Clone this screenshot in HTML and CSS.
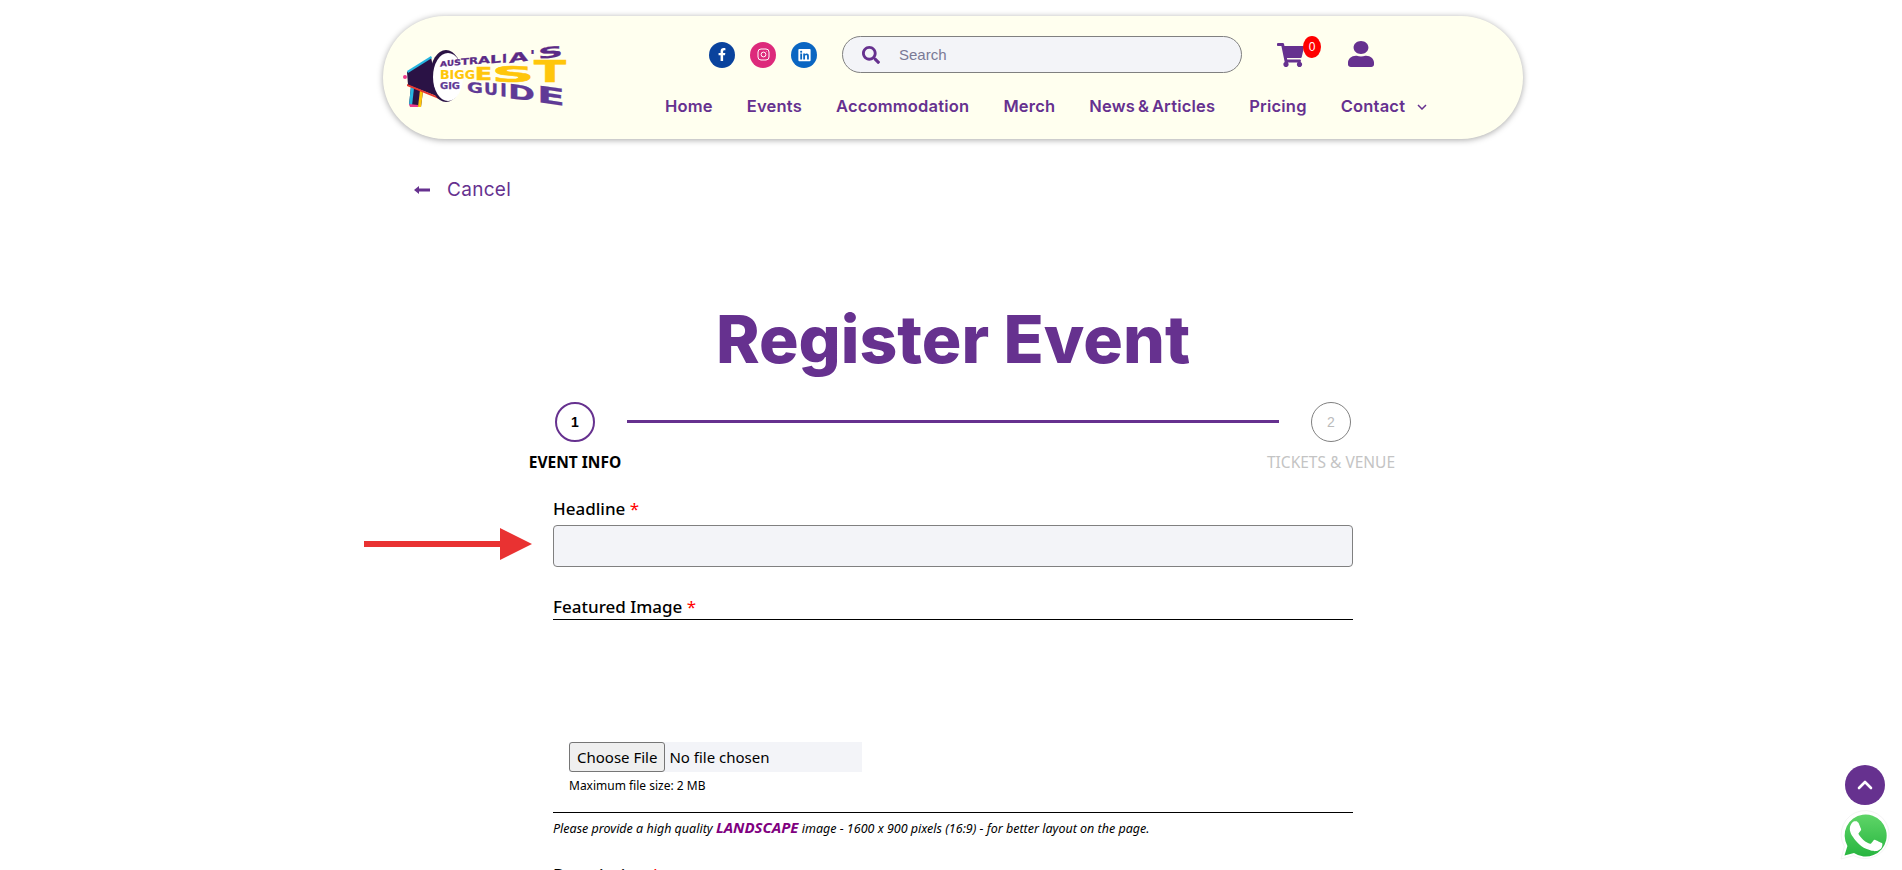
FILE: index.html
```html
<!DOCTYPE html>
<html lang="en">
<head>
    <meta charset="UTF-8">
    <meta name="viewport" content="width=device-width, initial-scale=1.0">
    <title>Register Event</title>
    <link rel="stylesheet" href="styles.css">
</head>
<body>
    <div class="page">
        <header class="site-header">
            <a class="logo" href="#">
                <svg width="190" height="90" viewBox="0 0 190 90" font-family="DejaVu Sans" font-weight="700">
                    <!-- megaphone -->
                    <polygon points="16,56 28,61 26,77 14,75" fill="#2a1245"/>
                    <polygon points="16,56 19,58 17,76 14,75" fill="#27b5e0"/>
                    <polygon points="25,60 28,61 26,77 23,77" fill="#ffc60b"/>
                    <polygon points="14,74 23,75 23,77 15,77" fill="#ee3a8c"/>
                    <polygon points="12,42 36,27 44,67 13,55" fill="#2a1245"/>
                    <polygon points="12,41 36,26 37,28 13,43" fill="#27b5e0"/>
                    <polygon points="12,54 44,67 44,69 12,56" fill="#e8372f"/>
                    <circle cx="10" cy="47" r="2" fill="#ee3a8c"/>
                    <ellipse cx="51" cy="46" rx="16" ry="26" fill="#2a1245"/>
                    <ellipse cx="53" cy="47" rx="15" ry="24" fill="#fff"/>
                    <!-- AUSTRALIA'S -->
                    <g fill="#5b2a86" stroke="#5b2a86" stroke-width=".25">
                        <text transform="translate(45 36.5) skewY(-3)" font-size="7" textLength="7" lengthAdjust="spacingAndGlyphs">A</text>
                        <text transform="translate(52 36) skewY(-3)" font-size="8" textLength="7" lengthAdjust="spacingAndGlyphs">U</text>
                        <text transform="translate(59 35.5) skewY(-4)" font-size="8" textLength="7" lengthAdjust="spacingAndGlyphs">S</text>
                        <text transform="translate(66 35) skewY(-4)" font-size="9" textLength="8" lengthAdjust="spacingAndGlyphs">T</text>
                        <text transform="translate(74 34.5) skewY(-5)" font-size="9.5" textLength="9" lengthAdjust="spacingAndGlyphs">R</text>
                        <text transform="translate(83 34) skewY(-5)" font-size="10" textLength="12" lengthAdjust="spacingAndGlyphs">A</text>
                        <text transform="translate(95 33.5) skewY(-6)" font-size="11" textLength="11" lengthAdjust="spacingAndGlyphs">L</text>
                        <text transform="translate(107 33) skewY(-6)" font-size="12" textLength="5" lengthAdjust="spacingAndGlyphs">I</text>
                        <text transform="translate(114 33) skewY(-7)" font-size="13" textLength="19" lengthAdjust="spacingAndGlyphs">A</text>
                        <text transform="translate(135 30)" font-size="14" textLength="5" lengthAdjust="spacingAndGlyphs">'</text>
                        <text transform="translate(143 29) skewY(-6)" font-size="15" textLength="25" lengthAdjust="spacingAndGlyphs">S</text>
                    </g>
                    <!-- BIGGEST -->
                    <g fill="#ffc60b" stroke="#ffc60b" stroke-width=".6">
                        <text x="45" y="49" font-size="12" stroke-width=".1" textLength="35" lengthAdjust="spacingAndGlyphs">BIGG</text>
                        <text x="80" y="50" font-size="17" textLength="17" lengthAdjust="spacingAndGlyphs">E</text>
                        <text x="97" y="52" font-size="21" textLength="42" lengthAdjust="spacingAndGlyphs">S</text>
                        <text x="139" y="52" font-size="31" textLength="32" lengthAdjust="spacingAndGlyphs">T</text>
                    </g>
                    <!-- GIG GUIDE -->
                    <g fill="#5f3a96" stroke="#5f3a96" stroke-width=".25">
                        <text x="45" y="59" font-size="9" textLength="20" lengthAdjust="spacingAndGlyphs">GIG</text>
                        <text transform="translate(72 62) skewY(5)" font-size="14" textLength="16" lengthAdjust="spacingAndGlyphs">G</text>
                        <text transform="translate(89 64) skewY(6)" font-size="16" textLength="14" lengthAdjust="spacingAndGlyphs">U</text>
                        <text transform="translate(105 66) skewY(7)" font-size="18" textLength="7" lengthAdjust="spacingAndGlyphs">I</text>
                        <text transform="translate(113 68) skewY(8)" font-size="20" textLength="27" lengthAdjust="spacingAndGlyphs">D</text>
                        <text transform="translate(142 72) skewY(8)" font-size="23" textLength="28" lengthAdjust="spacingAndGlyphs">E</text>
                    </g>
                </svg>
            </a>
            <div class="header-right">
                <div class="header-top">
                    <div class="social">
                        <a class="social-btn fb" href="#">
                            <svg width="8" height="13" viewBox="0 0 320 512"><path fill="#fff" d="M279.14 288l14.22-92.66h-88.91v-60.13c0-25.35 12.42-50.06 52.24-50.06h40.42V6.26S260.43 0 225.36 0c-73.22 0-121.08 44.38-121.08 124.72v70.62H22.89V288h81.39v224h100.17V288z"/></svg>
                        </a>
                        <a class="social-btn ig" href="#">
                            <svg width="13" height="13" viewBox="0 0 13 13" fill="none" stroke="#fff"><rect x="1" y="1" width="11" height="11" rx="3"/><circle cx="6.5" cy="6.5" r="2.4"/><circle cx="9.6" cy="3.4" r=".4" fill="#fff" stroke="none"/></svg>
                        </a>
                        <a class="social-btn li" href="#">
                            <svg width="13" height="14" viewBox="0 0 448 512"><path fill="#fff" d="M416 32H31.9C14.3 32 0 46.5 0 64.3v383.4C0 465.5 14.3 480 31.9 480H416c17.6 0 32-14.5 32-32.3V64.3c0-17.8-14.4-32.3-32-32.3zM135.4 416H69V202.2h66.5V416zm-33.2-243c-21.3 0-38.5-17.3-38.5-38.5S80.9 96 102.2 96c21.2 0 38.5 17.3 38.5 38.5 0 21.3-17.2 38.5-38.5 38.5zm282.1 243h-66.4V312c0-24.8-.5-56.7-34.5-56.7-34.6 0-39.9 27-39.9 54.9V416h-66.4V202.2h63.7v29.2h.9c8.9-16.8 30.6-34.5 62.9-34.5 67.2 0 79.7 44.3 79.7 101.9V416z"/></svg>
                        </a>
                    </div>
                    <div class="search">
                        <svg class="search-icon" width="18" height="18" viewBox="0 0 512 512"><path fill="#66318f" d="M505 442.7L405.3 343c-4.5-4.5-10.6-7-17-7H372c27.6-35.3 44-79.7 44-128C416 93.1 322.9 0 208 0S0 93.1 0 208s93.1 208 208 208c48.3 0 92.7-16.4 128-44v16.3c0 6.4 2.5 12.5 7 17l99.7 99.7c9.4 9.4 24.6 9.4 33.9 0l28.3-28.3c9.4-9.4 9.4-24.6.1-34zM208 336c-70.7 0-128-57.2-128-128 0-70.7 57.2-128 128-128 70.7 0 128 57.2 128 128 0 70.7-57.2 128-128 128z"/></svg>
                        <input class="search-input" type="text" placeholder="Search">
                    </div>
                    <a class="cart" href="#">
                        <svg width="27" height="24" viewBox="0 0 576 512"><path fill="#66318f" d="M528.12 301.319l47.273-208C578.806 78.301 567.391 64 551.99 64H159.208l-9.166-44.81C147.758 8.021 137.93 0 126.529 0H24C10.745 0 0 10.745 0 24v16c0 13.255 10.745 24 24 24h69.883l70.248 343.435C147.325 417.1 136 435.222 136 456c0 30.928 25.072 56 56 56s56-25.072 56-56c0-15.674-6.447-29.835-16.824-40h209.647C430.447 426.165 424 440.326 424 456c0 30.928 25.072 56 56 56s56-25.072 56-56c0-22.172-12.888-41.332-31.579-50.405l5.517-24.276c3.413-15.018-8.002-29.319-23.403-29.319H218.117l-6.545-32h293.145c11.206 0 20.92-7.754 23.403-18.681z"/></svg>
                        <span class="cart-badge">0</span>
                    </a>
                    <a class="account" href="#">
                        <svg width="26" height="26" viewBox="0 0 448 512" preserveAspectRatio="none"><path fill="#66318f" d="M224 256c70.7 0 128-57.3 128-128S294.7 0 224 0 96 57.3 96 128s57.3 128 128 128zm89.6 32h-16.7c-22.2 10.2-46.9 16-72.9 16s-50.6-5.8-72.9-16h-16.7C60.2 288 0 348.2 0 422.4V464c0 26.5 21.5 48 48 48h352c26.5 0 48-21.5 48-48v-41.6c0-74.2-60.2-134.4-134.4-134.4z"/></svg>
                    </a>
                </div>
                <nav class="main-nav">
                    <a href="#">Home</a>
                    <a href="#">Events</a>
                    <a href="#">Accommodation</a>
                    <a href="#">Merch</a>
                    <a href="#">News &amp; Articles</a>
                    <a href="#">Pricing</a>
                    <a class="has-sub" href="#">Contact
                        <svg width="10" height="6" viewBox="0 0 10 6" fill="none" stroke="#66318f" stroke-width="1.5"><path d="M1 1l4 4 4-4"/></svg>
                    </a>
                </nav>
            </div>
        </header>

        <a class="cancel" href="#">
            <svg width="16" height="8" viewBox="0 0 16 8"><path fill="#66318f" d="M0 4l5-4v2.6h11v2.8H5V8z"/></svg>
            Cancel
        </a>

        <h1 class="page-title">Register Event</h1>

        <div class="stepper">
            <div class="step active">
                <span class="step-num">1</span>
                <span class="step-label">EVENT INFO</span>
            </div>
            <div class="step-line"></div>
            <div class="step">
                <span class="step-num">2</span>
                <span class="step-label">TICKETS &amp; VENUE</span>
            </div>
        </div>

        <form class="event-form">
            <div class="field">
                <label class="field-label">Headline <span class="req">*</span></label>
                <input class="text-input" type="text">
            </div>
            <div class="field image-field">
                <label class="field-label underlined">Featured Image <span class="req">*</span></label>
                <div class="upload">
                    <input class="file-input" type="file">
                    <p class="file-note">Maximum file size: 2 MB</p>
                </div>
                <p class="image-hint">Please provide a high quality <b>LANDSCAPE</b> image - 1600 x 900 pixels (16:9) - for better layout on the page.</p>
            </div>
            <div class="field">
                <label class="field-label">Description <span class="req">*</span></label>
            </div>
        </form>
    </div>

    <!-- red arrow pointing at the headline field -->
    <svg class="pointer-arrow" width="168" height="32" viewBox="0 0 168 32"><path fill="#e93232" d="M0 13h136V0l32 16-32 16V19H0z"/></svg>

    <a class="to-top" href="#">
        <svg width="16" height="10" viewBox="0 0 16 10" fill="none" stroke="#fff" stroke-width="2.6" stroke-linecap="round" stroke-linejoin="round"><path d="M2 8l6-6 6 6"/></svg>
    </a>

    <a class="whatsapp" href="#">
        <svg width="50" height="50" viewBox="0 0 50 50">
            <defs>
                <linearGradient id="wa-green" x1="0" y1="0" x2="0" y2="1">
                    <stop offset="0" stop-color="#5fd568"/>
                    <stop offset="1" stop-color="#27b53f"/>
                </linearGradient>
            </defs>
            <path fill="#fff" stroke="#ececec" stroke-width=".6" d="M1 49l3.4-12.4A24 24 0 1 1 13.6 45.6z"/>
            <path fill="url(#wa-green)" d="M4.5 45.5l2.9-9.6A21 21 0 1 1 14 43z"/>
            <path fill="#fff" d="M18 12.6c-.6-1.3-1.2-1.3-1.8-1.4h-1.5c-.5 0-1.4.2-2.1 1-.7.8-2.8 2.7-2.8 6.6s2.8 7.7 3.2 8.2c.4.5 5.6 8.9 13.7 12.1 6.8 2.7 8.2 2.1 9.7 2 1.5-.1 4.8-1.9 5.4-3.8.7-1.9.7-3.5.5-3.8-.2-.4-.7-.6-1.5-1-.8-.4-4.7-2.3-5.4-2.6-.7-.3-1.3-.4-1.8.4-.5.8-2 2.6-2.5 3.1-.5.5-.9.6-1.7.2-.8-.4-3.3-1.2-6.3-3.9-2.3-2.1-3.9-4.6-4.4-5.4-.5-.8 0-1.2.3-1.6.4-.4.8-.9 1.2-1.4.4-.5.5-.8.8-1.3.3-.5.1-1-.1-1.4-.2-.4-1.7-4.4-2.4-5.9z"/>
        </svg>
    </a>
</body>
</html>
```

FILE: styles.css
```css
html, body { margin: 0; height: 870px; overflow: hidden; background: #fff; }
body { font-family: "Noto Sans", Arial, sans-serif; color: #000; }
a { text-decoration: none; color: inherit; }

.page { width: 1140px; margin-left: 383px; }

/* header */
.site-header {
    display: flex;
    margin-top: 16px;
    height: 123px;
    padding-left: 12px;
    box-sizing: border-box;
    background: #ffffef;
    border-radius: 62px;
    box-shadow: 0 1px 6px rgba(0, 0, 0, 0.35);
}
.logo { display: block; width: 270px; margin-top: 14px; }
.header-right { display: flex; flex-direction: column; padding-top: 20px; }
.header-top { display: flex; align-items: center; margin-left: 44px; height: 37px; }
.social { display: flex; gap: 15px; }
.social-btn {
    display: flex;
    align-items: center;
    justify-content: center;
    width: 26px;
    height: 26px;
    border-radius: 50%;
}
.fb { background: #0a439d; }
.ig { background: #dd2a7b; }
.li { background: #0a66c2; }
.search {
    display: flex;
    align-items: center;
    width: 400px;
    height: 37px;
    margin-left: 25px;
    padding-left: 19px;
    box-sizing: border-box;
    background: #f3f4f8;
    border: 1px solid #808080;
    border-radius: 19px;
}
.search-input {
    flex: 1;
    min-width: 0;
    margin-left: 19px;
    padding: 0;
    border: 0;
    outline: 0;
    background: transparent;
    font: 15px "Liberation Sans", Arial, sans-serif;
}
.search-input::placeholder { color: #7a7a96; }
.cart { position: relative; display: block; margin-left: 35px; height: 24px; }
.cart-badge {
    position: absolute;
    top: -7px;
    left: 26px;
    width: 18px;
    height: 22px;
    border-radius: 50%;
    background: #f00;
    color: #fff;
    font: 12px/22px "Liberation Sans", Arial, sans-serif;
    text-align: center;
}
.account { display: block; margin: -2px 0 0 44px; height: 26px; }
.main-nav {
    display: flex;
    gap: 34px;
    margin-top: 22px;
    font: 600 16.5px/22px Inter, sans-serif;
    letter-spacing: 0.2px;
    word-spacing: -1.5px;
    color: #66318f;
}
.has-sub svg { margin-left: 9px; vertical-align: 2px; }

/* back link */
.cancel {
    display: inline-flex;
    align-items: center;
    gap: 17px;
    margin: 38px 0 0 31px;
    font: 400 19px/26px Inter, sans-serif;
    letter-spacing: 0.3px;
    color: #66318f;
}

/* title */
.page-title {
    margin: 88px 0 0;
    text-align: center;
    font: 800 66px/96px Inter, sans-serif;
    color: #66318f;
}

/* stepper */
.stepper { display: flex; width: 860px; margin: 15px 0 0 140px; }
.step { display: flex; flex-direction: column; align-items: center; width: 104px; }
.step-num {
    display: flex;
    align-items: center;
    justify-content: center;
    width: 40px;
    height: 40px;
    box-sizing: border-box;
    border: 1px solid #808080;
    border-radius: 50%;
    color: #bbb;
    font: 14px "Liberation Sans", Arial, sans-serif;
}
.step-label {
    margin-top: 10px;
    white-space: nowrap;
    font-size: 15.5px;
    line-height: 20px;
    color: #c4c4c4;
}
.step.active .step-num { border: 2px solid #66318f; color: #000; font-weight: 700; }
.step.active .step-label { color: #000; font-weight: 700; }
.step-line { flex: 1; height: 3px; margin-top: 18px; background: #66318f; }

/* form */
.event-form { width: 800px; margin: 25px 0 0 170px; }
.field-label { display: block; font-size: 17px; font-weight: 500; line-height: 24px; }
.req { color: #f00; font-weight: 400; }
.text-input {
    display: block;
    width: 100%;
    height: 42px;
    margin-top: 4px;
    box-sizing: border-box;
    background: #f3f4f8;
    border: 1px solid #808080;
    border-radius: 4px;
}
.image-field { margin-top: 28px; }
.underlined { border-bottom: 1px solid #000; }
.upload {
    height: 193px;
    padding: 122px 0 0 16px;
    box-sizing: border-box;
    border-bottom: 1px solid #000;
}
.file-input {
    display: block;
    width: 293px;
    height: 30px;
    background: #f3f4f8;
    font: 15px "Noto Sans", Arial, sans-serif;
}
.file-input::file-selector-button {
    height: 30px;
    padding: 0 7px;
    margin-right: 4px;
    background: #efefef;
    border: 1px solid #767676;
    border-radius: 3px;
    font: inherit;
}
.file-note { margin: 4px 0 0; font-size: 12px; line-height: 20px; }
.image-hint { margin: 5px 0 0; font-size: 12.5px; line-height: 18px; font-style: italic; }
.image-hint b { color: #800080; font-size: 15px; }
.image-field + .field { margin-top: 25px; }

/* floating bits */
.pointer-arrow { position: absolute; left: 364px; top: 528px; }
.to-top {
    position: fixed;
    left: 1845px;
    top: 765px;
    display: flex;
    align-items: center;
    justify-content: center;
    width: 40px;
    height: 40px;
    border-radius: 50%;
    background: #66318f;
}
.whatsapp { position: fixed; left: 1840px; top: 810px; width: 50px; height: 50px; }
```
